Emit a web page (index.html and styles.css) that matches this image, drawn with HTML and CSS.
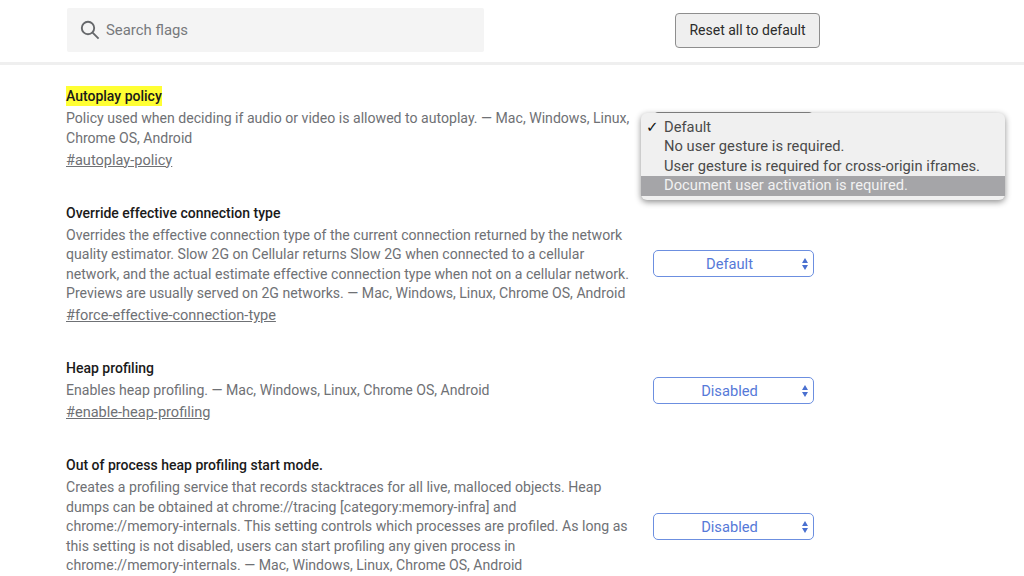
FILE: index.html
```html
<!DOCTYPE html>
<html lang="en">
<head>
  <meta charset="UTF-8" />
  <title>Experiments</title>
  <link rel="stylesheet" href="styles.css">
</head>
<body>
  <header class="header">
    <div class="search">
      <svg class="search__icon" viewBox="0 0 20 20">
        <circle cx="8" cy="8" r="6.2" />
        <path d="M12.6 12.6 L18.6 18.6" />
      </svg>
      <span class="search__text">Search flags</span>
    </div>
    <button class="reset">Reset all to default</button>
  </header>

  <main class="flags">
    <section class="flag flag--first">
      <div class="flag__info">
        <h3 class="flag__title"><mark>Autoplay policy</mark></h3>
        <p class="flag__desc">Policy used when deciding if audio or video is allowed to autoplay. — Mac, Windows, Linux, Chrome OS, Android</p>
        <a class="flag__link" href="#">#autoplay-policy</a>
      </div>
      <div class="select select--open"></div>
      <ul class="menu">
        <li class="menu__item menu__item--checked">Default</li>
        <li class="menu__item">No user gesture is required.</li>
        <li class="menu__item">User gesture is required for cross-origin iframes.</li>
        <li class="menu__item menu__item--active">Document user activation is required.</li>
      </ul>
    </section>

    <section class="flag">
      <div class="flag__info">
        <h3 class="flag__title">Override effective connection type</h3>
        <p class="flag__desc">Overrides the effective connection type of the current connection returned by the network quality estimator. Slow 2G on Cellular returns Slow 2G when connected to a cellular network, and the actual estimate effective connection type when not on a cellular network. Previews are usually served on 2G networks. — Mac, Windows, Linux, Chrome OS, Android</p>
        <a class="flag__link" href="#">#force-effective-connection-type</a>
      </div>
      <div class="select">Default</div>
    </section>

    <section class="flag">
      <div class="flag__info">
        <h3 class="flag__title">Heap profiling</h3>
        <p class="flag__desc">Enables heap profiling. — Mac, Windows, Linux, Chrome OS, Android</p>
        <a class="flag__link" href="#">#enable-heap-profiling</a>
      </div>
      <div class="select">Disabled</div>
    </section>

    <section class="flag flag--last">
      <div class="flag__info">
        <h3 class="flag__title">Out of process heap profiling start mode.</h3>
        <p class="flag__desc">Creates a profiling service that records stacktraces for all live, malloced objects. Heap dumps can be obtained at chrome://tracing [category:memory-infra] and chrome://memory-internals. This setting controls which processes are profiled. As long as this setting is not disabled, users can start profiling any given process in chrome://memory-internals. — Mac, Windows, Linux, Chrome OS, Android</p>
      </div>
      <div class="select">Disabled</div>
    </section>
  </main>
</body>
</html>
```
FILE: styles.css
```css
* { margin: 0; padding: 0; box-sizing: border-box; }

html, body {
  height: 576px;
  overflow: hidden;
}

body {
  font-family: Roboto, 'Liberation Sans', sans-serif;
  font-size: 14.1px;
  color: #6f7175;
  background: #fff;
}

.header {
  display: flex;
  align-items: center;
  height: 65px;
  padding: 0 0 2px 67px;
  border-bottom: 3px solid #efefef;
}

.search {
  display: flex;
  align-items: center;
  width: 417px;
  height: 44px;
  padding-left: 13px;
  background: #f4f4f4;
  border-radius: 2px;
}

.search__icon {
  width: 20px;
  height: 20px;
  fill: none;
  stroke: #66686b;
  stroke-width: 1.9;
}

.search__text {
  margin-left: 6px;
  font-size: 14.9px;
  color: #77797c;
}

.reset {
  width: 145px;
  height: 35px;
  margin-left: 191px;
  font-family: inherit;
  font-size: 14px;
  color: #2b2b2b;
  background: #efefef;
  border: 1px solid #8e8e8e;
  border-radius: 4px;
}

.flag {
  position: relative;
  display: flex;
  align-items: center;
  padding-left: 66px;
  margin-bottom: 33px;
}

.flag--first {
  margin-top: 21px;
}

.flag--last .flag__info {
  padding-bottom: 22px;
}

.flag__info {
  width: 570px;
}

.flag__title {
  font-size: 14px;
  font-weight: 500;
  line-height: 20px;
  color: #1a1a1a;
  margin-bottom: 3px;
}

.flag__title mark {
  display: inline-block;
  background: #ffff33;
  color: inherit;
}

.flag__desc {
  max-width: 566px;
  line-height: 19.5px;
}

.flag__link {
  display: inline-block;
  margin-top: 2.5px;
  font-size: 14.55px;
  line-height: 19px;
  color: #6f7175;
}

.select {
  position: relative;
  flex: none;
  width: 161px;
  height: 27px;
  margin-left: 17px;
  padding-right: 8px;
  font-size: 14.7px;
  line-height: 26px;
  text-align: center;
  color: #5679d8;
  background: #fff;
  border: 1px solid #6c8fe0;
  border-radius: 5px;
}

.select::before,
.select::after {
  content: '';
  position: absolute;
  right: 5px;
  border-left: 3px solid transparent;
  border-right: 3px solid transparent;
}

.select::before {
  top: 7px;
  border-bottom: 5px solid #4a70d0;
}

.select::after {
  top: 14px;
  border-top: 5px solid #4a70d0;
}

.select--open {
  margin-top: -4px;
  border-color: #8a8a8a;
}

.menu {
  position: absolute;
  top: 27px;
  left: 641px;
  width: 364px;
  height: 87px;
  padding-top: 4.5px;
  list-style: none;
  font-size: 14.7px;
  letter-spacing: 0.03px;
  background: #f0f0f0;
  border-radius: 6px;
  box-shadow: 0 2px 6px rgba(0, 0, 0, 0.45);
}

.menu__item {
  position: relative;
  height: 19.5px;
  padding-left: 23px;
  line-height: 19.5px;
  color: #4a4a4a;
}

.menu__item--checked::before {
  content: '\2713';
  position: absolute;
  left: 5px;
  color: #111;
  font-family: 'DejaVu Sans', sans-serif;
  font-size: 15px;
  font-weight: 700;
}

.menu__item--active {
  background: #a5a5a8;
  color: #f2f2f2;
}
```
